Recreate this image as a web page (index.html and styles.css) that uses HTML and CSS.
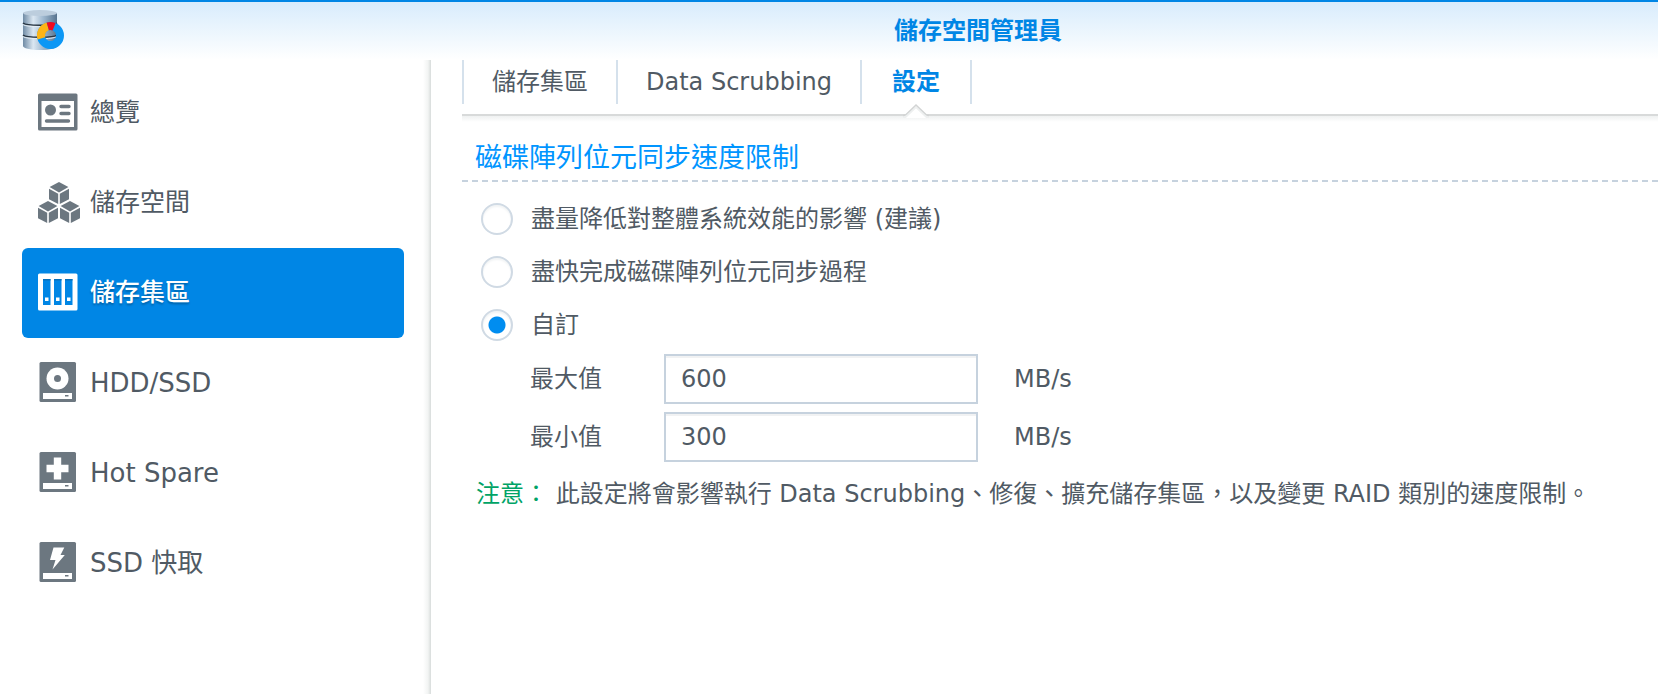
FILE: index.html
```html
<!DOCTYPE html>
<html lang="zh-Hant">
<head>
  <meta charset="UTF-8" />
  <meta name="viewport" content="width=device-width, initial-scale=1.0"/>
  <title>儲存空間管理員</title>
  <link rel="stylesheet" href="styles.css">
</head>
<body>
  <header class="titlebar">
    <svg class="app-icon" viewBox="0 0 44 44" aria-hidden="true">
      <defs>
        <linearGradient id="metal" x1="0" x2="1" y1="0" y2="0">
          <stop offset="0" stop-color="#6f8ba5"/>
          <stop offset="0.3" stop-color="#dbe7f2"/>
          <stop offset="0.6" stop-color="#9fb8cf"/>
          <stop offset="1" stop-color="#56738e"/>
        </linearGradient>
      </defs>
      <path d="M1 4v33c0 2 7 4 17 4s17-2 17-4V4z" fill="url(#metal)"/>
      <ellipse cx="18" cy="4" rx="17" ry="3" fill="#bccddd"/>
      <path d="M1 14c3 3 31 3 34 0M1 26c3 3 31 3 34 0" fill="none" stroke="#273440" stroke-width="1.600"/>
      <path d="M1 15.500c3 3 31 3 34 0M1 27.500c3 3 31 3 34 0" fill="none" stroke="#e6eef5" stroke-width="1"/>
      <g fill="none" stroke-width="8">
        <circle cx="28.500" cy="26.500" r="9.500" stroke="#0c97f5"/>
        <path d="M19.400 29.300A9.500 9.500 0 0 1 25.800 17.400" stroke="#fdb515"/>
        <path d="M25.800 17.400A9.500 9.500 0 0 1 32.100 17.700" stroke="#f00a1e"/>
      </g>
    </svg>
    <h1>儲存空間管理員</h1>
  </header>
  <div class="window">
    <nav class="sidebar">
      <a href="#overview" class="item">
        <svg viewBox="0 0 42 42" aria-hidden="true">
          <rect x="0" y="1.500" width="39.500" height="37" rx="1.500" fill="#6c7780"/>
          <rect x="3.500" y="9" width="32.500" height="26" fill="#fff"/>
          <circle cx="12.500" cy="18" r="5.500" fill="#6c7780"/>
          <path d="M23 14.500h8M23 21.500h8M8.500 29h22" stroke="#6c7780" stroke-width="3.400" stroke-linecap="round"/>
        </svg>
        <span>總覽</span>
      </a>
      <a href="#volume" class="item">
        <svg viewBox="0 0 42 42" aria-hidden="true">
          <defs>
            <g id="cube" fill="#6c7780">
              <path d="M10 0l9.400 5L10 10.500.6 5z"/>
              <path d="M0 6.700l9.200 5.100V22L0 17.200z"/>
              <path d="M20 6.700l-9.200 5.100V22l9.200-4.800z"/>
            </g>
          </defs>
          <use href="#cube" x="11" y="0"/>
          <use href="#cube" x="0" y="19"/>
          <use href="#cube" x="22" y="19"/>
        </svg>
        <span>儲存空間</span>
      </a>
      <a href="#pool" class="item active" aria-current="page">
        <svg viewBox="0 0 42 42" aria-hidden="true">
          <rect x="0" y="1.500" width="39.500" height="37" rx="1.500" fill="#fff"/>
          <path d="M5 7h7.500v26H5zM16 7h7.500v26H16zM27 7h7.500v26H27z" fill="#0086e5"/>
          <path d="M5 7h7.500v1.500H5zM16 7h7.500v1.500H16zM27 7h7.500v1.500H27z" fill="#0670bb"/>
          <path d="M7 25.500h3.500V29H7zM18 25.500h3.500V29H18zM29 25.500h3.500V29H29z" fill="#fff"/>
        </svg>
        <span>儲存集區</span>
      </a>
      <a href="#hdd" class="item latin">
        <svg viewBox="0 0 42 42" aria-hidden="true">
          <rect x="1.500" y="0" width="36.500" height="40" rx="1.500" fill="#6c7780"/>
          <circle cx="19.500" cy="16.500" r="11" fill="#fff"/>
          <circle cx="19.500" cy="16.500" r="3.500" fill="#6c7780"/>
          <path d="M5 31h29v6H5z" fill="#fff"/>
          <path d="M27 33h3.500v1.500H27z" fill="#6c7780"/>
        </svg>
        <span>HDD/SSD</span>
      </a>
      <a href="#spare" class="item latin">
        <svg viewBox="0 0 42 42" aria-hidden="true">
          <rect x="1.500" y="0" width="36.500" height="40" rx="1.500" fill="#6c7780"/>
          <path d="M15.800 5.500h7.400v7.300h7.300v7.400h-7.300v7.300h-7.400v-7.300H8.500v-7.400h7.300z" fill="#fff"/>
          <path d="M5 31h29v6H5z" fill="#fff"/>
          <path d="M27 33h3.500v1.500H27z" fill="#6c7780"/>
        </svg>
        <span>Hot Spare</span>
      </a>
      <a href="#cache" class="item latin">
        <svg viewBox="0 0 42 42" aria-hidden="true">
          <rect x="1.500" y="0" width="36.500" height="40" rx="1.500" fill="#6c7780"/>
          <path d="M15.500 5.500h10.800L22.500 13h4.300L14.500 27.500 17.500 18H12z" fill="#fff"/>
          <path d="M5 31h29v6H5z" fill="#fff"/>
          <path d="M27 33h3.500v1.500H27z" fill="#6c7780"/>
        </svg>
        <span>SSD 快取</span>
      </a>
    </nav>
    <main class="content">
      <div class="tabs" role="tablist">
        <button type="button" class="tab" role="tab" aria-selected="false">儲存集區</button>
        <button type="button" class="tab" role="tab" aria-selected="false">Data Scrubbing</button>
        <button type="button" class="tab active" role="tab" aria-selected="true">設定
          <svg class="arrow" viewBox="0 0 26 14" aria-hidden="true">
            <path d="M1 14v-1.500L13 1l12 11.500V14z" fill="#fff"/>
            <path d="M0 13.500q2 0 3-1L13 3l10 9.500q1 1 3 1" fill="none" stroke="#eef0f0" stroke-width="2"/>
            <path d="M0 11.500q2 0 3-1L13 1l10 9.500q1 1 3 1" fill="none" stroke="#d2d4d4" stroke-width="1.300"/>
          </svg>
        </button>
      </div>
      <form class="settings">
        <h2>磁碟陣列位元同步速度限制</h2>
        <div class="options">
          <label class="option"><input type="radio" name="speed" value="low">盡量降低對整體系統效能的影響 (建議)</label>
          <label class="option"><input type="radio" name="speed" value="fast">盡快完成磁碟陣列位元同步過程</label>
          <label class="option"><input type="radio" name="speed" value="custom" checked>自訂</label>
        </div>
        <div class="fields">
          <div class="field">
            <label for="max">最大值</label>
            <input type="text" id="max" value="600">
            <span>MB/s</span>
          </div>
          <div class="field">
            <label for="min">最小值</label>
            <input type="text" id="min" value="300">
            <span>MB/s</span>
          </div>
        </div>
        <p class="note"><span class="note-label">注意：</span> 此設定將會影響執行 Data Scrubbing、修復、擴充儲存集區，以及變更 RAID 類別的速度限制。</p>
      </form>
    </main>
  </div>
</body>
</html>
```

FILE: styles.css
```css
:root {
  --blue: #0086e5;
  --text: #505a64;
  --line: #c6d2de;
}
* {
  box-sizing: border-box;
}
body {
  margin: 0;
  min-height: 100vh;
  display: flex;
  flex-direction: column;
  background: #fff;
  color: var(--text);
  font-family: Verdana, "DejaVu Sans", "Noto Sans CJK TC", sans-serif;
  font-size: 24px;
  line-height: 32px;
}
button,
input {
  font: inherit;
  color: inherit;
}
.titlebar {
  display: flex;
  align-items: center;
  height: 60px;
  padding: 0 22px;
  border-top: 2px solid var(--blue);
  background: linear-gradient(#d8ecfc, #fff);
}
.app-icon {
  width: 44px;
  height: 44px;
}
.titlebar h1 {
  flex: 1;
  margin: 0;
  padding-left: 254px;
  text-align: center;
  font-size: 24px;
  color: var(--blue);
}
.window {
  flex: 1;
  display: flex;
}
.sidebar {
  flex: none;
  width: 431px;
  padding: 8px 27px 8px 22px;
  background: linear-gradient(to left, #d8dcdb, #f2f4f3 3px, #fff 8px);
}
.item {
  display: flex;
  align-items: center;
  gap: 10px;
  height: 90px;
  padding: 0 16px;
  border-radius: 6px;
  font-size: 25px;
  color: var(--text);
  text-decoration: none;
}
.item svg {
  width: 42px;
  height: 42px;
}
.item.latin {
  font-size: 26px;
}
.item.active {
  background: var(--blue);
  color: #fff;
  font-weight: 500;
  text-shadow: 0 2px 2px rgba(0, 0, 0, 0.25);
}
.content {
  flex: 1;
  min-width: 0;
  padding-left: 31px;
}
.tabs {
  position: relative;
  display: flex;
  padding-bottom: 10px;
  border-bottom: 2px solid #d8dada;
}
.tabs::after {
  content: "";
  position: absolute;
  top: 100%;
  left: 0;
  right: 0;
  height: 6px;
  margin-top: 2px;
  background: linear-gradient(#eff1f1, #fff);
}
.tab {
  position: relative;
  height: 44px;
  padding: 0 28px;
  border: 0;
  border-left: 2px solid #d5e1ec;
  background: none;
  line-height: 40px;
  cursor: pointer;
}
.tab:last-child {
  border-right: 2px solid #d5e1ec;
}
.tab.active {
  padding: 0 30px;
  color: var(--blue);
  font-weight: bold;
}
.arrow {
  position: absolute;
  z-index: 1;
  top: 100%;
  left: 50%;
  width: 26px;
  height: 14px;
  margin-left: -13px;
}
.settings h2 {
  margin: 22px 0 0;
  padding: 0 13px 4px;
  font-size: 27px;
  font-weight: normal;
  line-height: 40px;
  color: #0095ff;
  background: repeating-linear-gradient(to right, var(--line) 0 6px, #fff 6px 10px) bottom / 100% 2px no-repeat;
}
.options {
  display: flex;
  flex-direction: column;
  gap: 21px;
  padding: 21px 19px 13px;
}
.option {
  display: flex;
  align-items: center;
  gap: 18px;
}
.option input {
  appearance: none;
  width: 32px;
  height: 32px;
  margin: 0;
  border: 2px solid #d0dae4;
  border-radius: 50%;
  background: #fff;
  box-shadow: inset 0 2px 2px #f2f4f5;
}
.option input:checked {
  background: radial-gradient(circle, #008df0 8px, #fff 9px);
}
.fields {
  display: flex;
  flex-direction: column;
  gap: 8px;
  padding-left: 68px;
}
.field {
  display: flex;
  align-items: center;
}
.field label {
  width: 134px;
}
.field input {
  width: 314px;
  height: 50px;
  margin-right: 36px;
  padding: 0 15px;
  border: 2px solid var(--line);
  background: #fff;
  box-shadow: inset 0 2px 0 #f1f2f3;
}
.note {
  margin: 14px 0 0;
  padding: 0 14px;
  line-height: 36px;
}
.note-label {
  color: #00a366;
}
```
